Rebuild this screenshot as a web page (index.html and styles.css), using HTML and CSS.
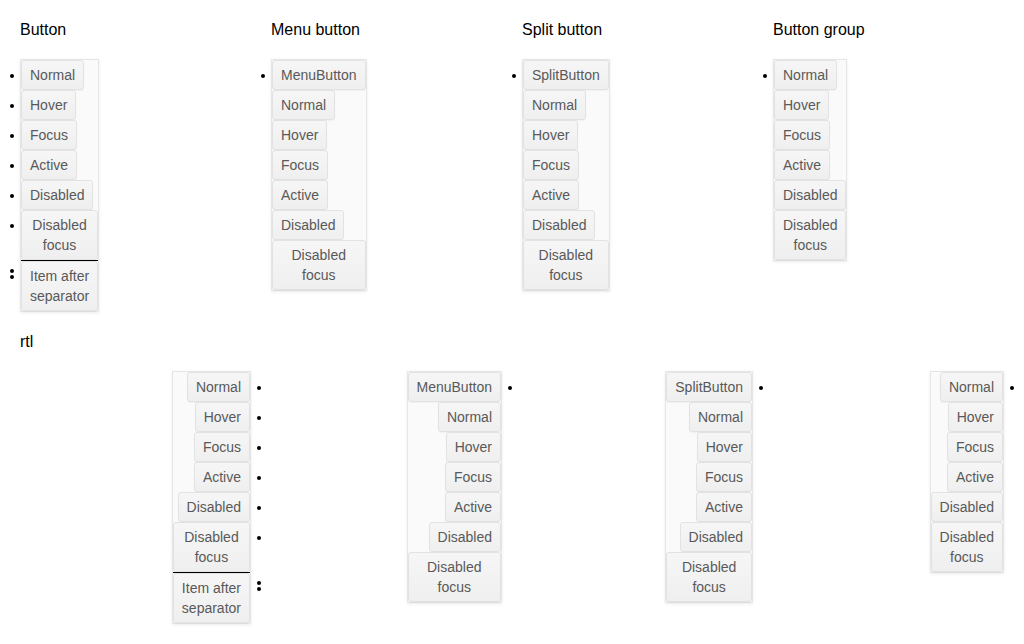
FILE: index.html
```html
<!DOCTYPE html>
<html>
<head>
<meta charset="utf-8">
<link rel="stylesheet" href="styles.css">
</head>
<body>
<div class="page">
  <div class="row">
    <section class="col">
      <div class="title">Button</div>
      <ul class="tb">
        <li><div class="stack"><span class="btn">Normal</span></div></li>
        <li><div class="stack"><span class="btn">Hover</span></div></li>
        <li><div class="stack"><span class="btn">Focus</span></div></li>
        <li><div class="stack"><span class="btn">Active</span></div></li>
        <li><div class="stack"><span class="btn">Disabled</span></div></li>
        <li><div class="stack"><span class="btn">Disabled focus</span></div></li>
        <li class="sep"></li>
        <li><div class="stack"><span class="btn">Item after separator</span></div></li>
      </ul>
    </section>
    <section class="col">
      <div class="title">Menu button</div>
      <ul class="tb">
        <li><div class="stack">
          <span class="btn">MenuButton</span>
          <span class="btn">Normal</span>
          <span class="btn">Hover</span>
          <span class="btn">Focus</span>
          <span class="btn">Active</span>
          <span class="btn">Disabled</span>
          <span class="btn">Disabled focus</span>
        </div></li>
      </ul>
    </section>
    <section class="col">
      <div class="title">Split button</div>
      <ul class="tb">
        <li><div class="stack">
          <span class="btn">SplitButton</span>
          <span class="btn">Normal</span>
          <span class="btn">Hover</span>
          <span class="btn">Focus</span>
          <span class="btn">Active</span>
          <span class="btn">Disabled</span>
          <span class="btn">Disabled focus</span>
        </div></li>
      </ul>
    </section>
    <section class="col">
      <div class="title">Button group</div>
      <ul class="tb">
        <li><div class="stack">
          <span class="btn">Normal</span>
          <span class="btn">Hover</span>
          <span class="btn">Focus</span>
          <span class="btn">Active</span>
          <span class="btn">Disabled</span>
          <span class="btn">Disabled focus</span>
        </div></li>
      </ul>
    </section>
  </div>

  <div class="title">rtl</div>

  <div class="row">
    <section class="col" dir="rtl">
      <ul class="tb">
        <li><div class="stack"><span class="btn">Normal</span></div></li>
        <li><div class="stack"><span class="btn">Hover</span></div></li>
        <li><div class="stack"><span class="btn">Focus</span></div></li>
        <li><div class="stack"><span class="btn">Active</span></div></li>
        <li><div class="stack"><span class="btn">Disabled</span></div></li>
        <li><div class="stack"><span class="btn">Disabled focus</span></div></li>
        <li class="sep"></li>
        <li><div class="stack"><span class="btn">Item after separator</span></div></li>
      </ul>
    </section>
    <section class="col" dir="rtl">
      <ul class="tb">
        <li><div class="stack">
          <span class="btn">MenuButton</span>
          <span class="btn">Normal</span>
          <span class="btn">Hover</span>
          <span class="btn">Focus</span>
          <span class="btn">Active</span>
          <span class="btn">Disabled</span>
          <span class="btn">Disabled focus</span>
        </div></li>
      </ul>
    </section>
    <section class="col" dir="rtl">
      <ul class="tb">
        <li><div class="stack">
          <span class="btn">SplitButton</span>
          <span class="btn">Normal</span>
          <span class="btn">Hover</span>
          <span class="btn">Focus</span>
          <span class="btn">Active</span>
          <span class="btn">Disabled</span>
          <span class="btn">Disabled focus</span>
        </div></li>
      </ul>
    </section>
    <section class="col" dir="rtl">
      <ul class="tb">
        <li><div class="stack">
          <span class="btn">Normal</span>
          <span class="btn">Hover</span>
          <span class="btn">Focus</span>
          <span class="btn">Active</span>
          <span class="btn">Disabled</span>
          <span class="btn">Disabled focus</span>
        </div></li>
      </ul>
    </section>
  </div>
</div>
</body>
</html>
```

FILE: styles.css
```css
html, body {
  margin: 0;
  background: #ffffff;
}

.page {
  padding: 20px;
  font-family: "Liberation Sans", Arial, sans-serif;
  color: #000;
}

.row {
  display: grid;
  grid-template-columns: repeat(4, 231px);
  column-gap: 20px;
  align-items: start;
  margin-bottom: 20px;
}

.title {
  font-size: 16px;
  line-height: 20px;
  margin-bottom: 19px;
}

.tb {
  width: min-content;
  margin: 0;
  padding: 0;
  list-style: disc outside;
  background: #fafafa;
  border: 1px solid #e6e6e6;
  box-shadow: 0 1px 3px rgba(0, 0, 0, 0.08);
  font-size: 14px;
}

/* li start is pushed in so the outside marker sits closer to the box;
   the content is pulled back by the same amount */
.tb li {
  margin: 0;
  margin-inline-start: 4px;
  padding: 0;
}

.tb li.sep {
  height: 1px;
  line-height: 21px;
  background: #000;
  box-shadow: -4px 0 0 #000;
}

[dir="rtl"] .tb li.sep {
  box-shadow: 4px 0 0 #000;
}

.stack {
  display: flex;
  flex-direction: column;
  align-items: flex-start;
  margin-inline-start: -4px;
}

.btn {
  display: block;
  box-sizing: border-box;
  max-width: 100%;
  padding: 4px 8px;
  border: 1px solid #e2e2e2;
  border-radius: 3px;
  background: linear-gradient(#f6f6f6, #efefef);
  box-shadow: 0 1px 1px rgba(0, 0, 0, 0.04);
  color: #595959;
  font-size: 14px;
  line-height: 20px;
  text-align: center;
}
```
